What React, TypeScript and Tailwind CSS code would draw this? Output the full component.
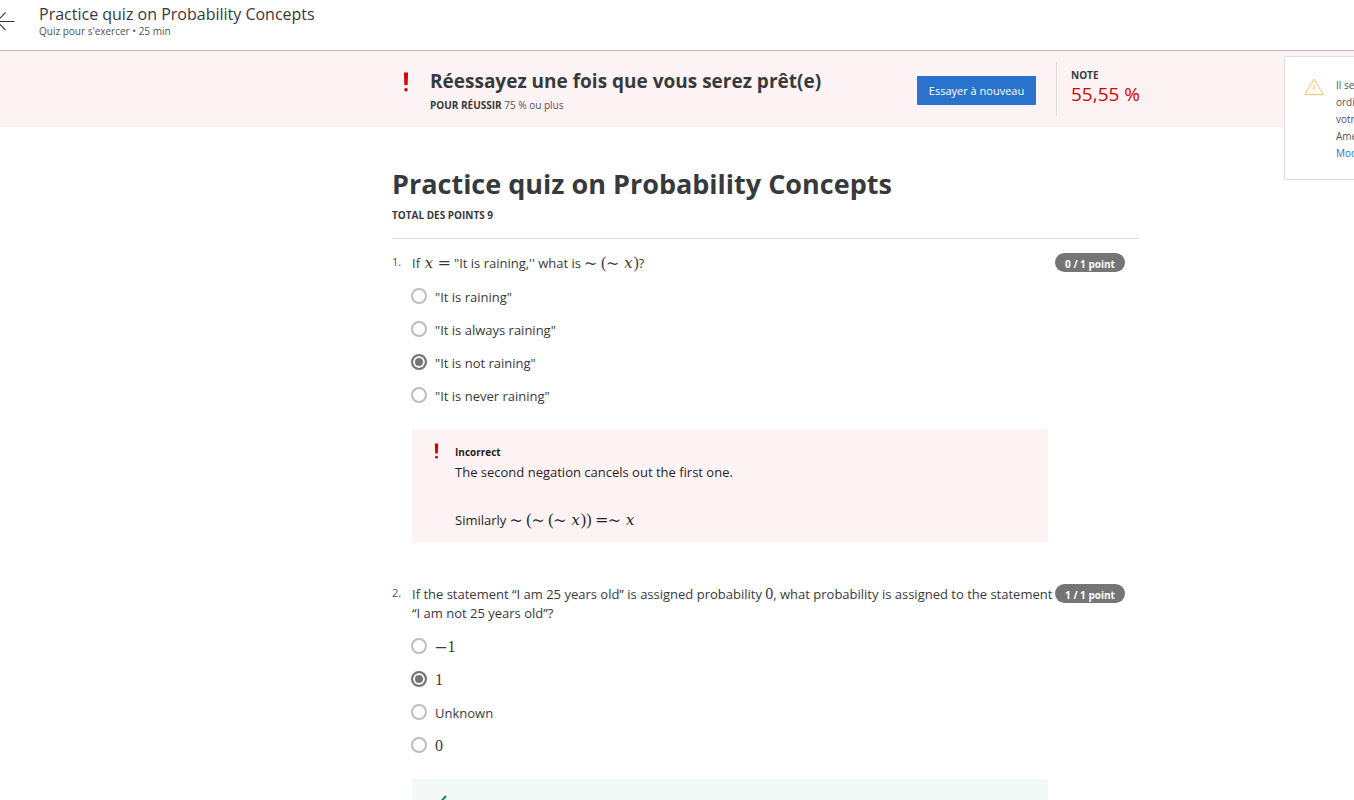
import { useState, type ReactNode } from "react";

function X() {
  return <span className="font-['DejaVu_Math_TeX_Gyre','DejaVu_Serif',serif] text-[15px] leading-none">𝑥</span>;
}

function Op({ children }: { children: ReactNode }) {
  return (
    <span className="font-['DejaVu_Math_TeX_Gyre','DejaVu_Sans',sans-serif] text-[16px] leading-none font-extralight">
      {children}
    </span>
  );
}

function MathText({ children }: { children: ReactNode }) {
  return (
    <span className="font-['Liberation_Serif',serif] text-base leading-none">{children}</span>
  );
}

function Bang({ className }: { className: string }) {
  return (
    <svg viewBox="0 0 6 20" className={className} fill="#d30001" aria-hidden="true">
      <path d="M0.9 0.5h4.2l-0.5 12.5h-3.2z" />
      <circle cx="3" cy="17.7" r="1.8" />
    </svg>
  );
}

interface QuestionProps {
  id: string;
  number: string;
  prompt: ReactNode;
  score: string;
  options: ReactNode[];
  initial: number;
  feedback: ReactNode;
}

function Question({ id, number, prompt, score, options, initial, feedback }: QuestionProps) {
  const [selected, setSelected] = useState(initial);
  return (
    <li className="flex items-start">
      <span className="w-5 shrink-0 text-[11px] leading-[18px] text-[#525252]">{number}</span>
      <div className="min-w-0 flex-1 pt-px">
        <div id={`${id}-prompt`} className="text-[13px] leading-[19px] text-[#373a3c]">
          {prompt}
        </div>
        <div role="radiogroup" aria-labelledby={`${id}-prompt`} className="mt-1.5">
          {options.map((option, i) => (
            <label
              key={i}
              className="flex h-[33px] items-center gap-2 text-[13px] text-[#373a3c]"
            >
              <input
                type="radio"
                name={id}
                checked={selected === i}
                onChange={() => setSelected(i)}
                className="-ml-px size-4 shrink-0 appearance-none rounded-full border-2 border-[#bdbdbd] bg-white checked:border-[#757575] checked:bg-[#757575] checked:shadow-[inset_0_0_0_2px_white]"
              />
              <span className="pt-1">{option}</span>
            </label>
          ))}
        </div>
        <div className="mt-[18px] max-w-[636px]">{feedback}</div>
      </div>
      <div className="mr-[15px] h-[19px] w-[70px] shrink-0 rounded-full bg-[#757575] pt-0.5 text-center text-[10px] leading-[18px] font-bold text-white">
        {score}
      </div>
    </li>
  );
}

export default function App() {
  return (
    <div className="relative flex h-screen flex-col overflow-hidden bg-white font-['Open_Sans','Noto_Sans',sans-serif] text-[#373a3c]">
      <header className="flex h-[51px] shrink-0 items-start border-b border-[#bbbbbb]">
        <a href="#course" aria-label="Retour" className="mt-2.5 w-[39px] shrink-0">
          <svg viewBox="0 0 16 22" className="h-[22px] w-4" fill="none" stroke="#373a3c" strokeWidth="1.1">
            <path d="M14.5 11.5H-2M5.5 2.5L-3 11.5L5.5 20" />
          </svg>
        </a>
        <div className="pt-1">
          <p className="text-base leading-5">Practice quiz on Probability Concepts</p>
          <p className="text-[10px] leading-[14px] text-[#525252]">Quiz pour s'exercer • 25 min</p>
        </div>
      </header>

      <section className="shrink-0 bg-[#fef3f4] pl-[392px]">
        <div className="flex h-[76px] max-w-[748px] items-start">
          <Bang className="mt-[21px] ml-[11px] h-5 w-1.5 shrink-0" />
          <div className="ml-[21px] flex-1 pt-[17px]">
            <h2 className="text-[19px] leading-[26px] font-bold">Réessayez une fois que vous serez prêt(e)</h2>
            <p className="mt-1 text-[10px] leading-[14px] text-[#525252]">
              <strong className="text-[#373a3c]">POUR RÉUSSIR</strong> 75 % ou plus
            </p>
          </div>
          <button type="button" className="mt-[25px] h-[29px] w-[119px] shrink-0 rounded-[1px] bg-[#2a73cc] pt-0.5 text-[11px] text-white">
            Essayer à nouveau
          </button>
          <div className="mt-[11px] ml-5 h-[54px] w-[84px] shrink-0 border-l border-[#dddddd] pt-1.5 pl-3.5 whitespace-nowrap">
            <p className="text-[10px] leading-[14px] font-bold">NOTE</p>
            <p className="text-[19px] leading-6 text-[#d30001]">55,55 %</p>
          </div>
        </div>
      </section>

      <main className="pl-[392px]">
        <div className="max-w-[748px]">
          <h1 className="pt-[38px] text-[27px] leading-[38px] font-bold">Practice quiz on Probability Concepts</h1>
          <p className="mt-[5px] mb-4 text-[10px] leading-[14px] font-bold">TOTAL DES POINTS 9</p>
          <ol className="flex flex-col gap-[42px] border-t border-[#dddddd] pt-3.5">
            <Question
              id="q1"
              number="1."
              score="0 / 1 point"
              initial={2}
              prompt={
                <>
                  If <MathText><X /> <Op>=</Op></MathText> "It is raining,'' what is{" "}
                  <MathText><Op>∼</Op> (<Op>∼</Op> <X />)</MathText>?
                </>
              }
              options={['"It is raining"', '"It is always raining"', '"It is not raining"', '"It is never raining"']}
              feedback={
                <div className="flex min-h-[113px] items-start bg-[#fef3f4] text-[#1f1f1f]">
                  <Bang className="mt-3.5 ml-[22px] h-4 w-[5px] shrink-0" />
                  <div className="ml-4 pt-4">
                    <p className="text-[10px] leading-[14px] font-bold">Incorrect</p>
                    <p className="mt-1 text-[13px] leading-[19px]">The second negation cancels out the first one.</p>
                    <p className="mt-[29px] text-[13px] leading-[19px]">
                      Similarly{" "}
                      <MathText>
                        <Op>∼</Op> (<Op>∼</Op> (<Op>∼</Op> <X />)) <Op>=∼</Op> <X />
                      </MathText>
                    </p>
                  </div>
                </div>
              }
            />
            <Question
              id="q2"
              number="2."
              score="1 / 1 point"
              initial={1}
              prompt={
                <>
                  If the statement “I am 25 years old” is assigned probability <MathText>0</MathText>, what
                  probability is assigned to the statement “I am not 25 years old”?
                </>
              }
              options={[<MathText><Op>−</Op>1</MathText>, <MathText>1</MathText>, "Unknown", <MathText>0</MathText>]}
              feedback={
                <div className="min-h-[113px] bg-[#f3f9f7]">
                  <svg viewBox="0 0 20 16" className="ml-4 h-[46px] w-5" fill="none" stroke="#1f8354" strokeWidth="2">
                    <path d="M4 9L8 13L18 2" />
                  </svg>
                </div>
              }
            />
          </ol>
        </div>
      </main>

      <aside className="absolute top-14 -right-[178px] flex h-[124px] w-[248px] items-start rounded-xs border border-[#dddddd] bg-white">
        <svg viewBox="0 0 20 18" className="mt-[21px] ml-[19px] h-[18px] w-5 shrink-0" fill="none" stroke="#f6c168" strokeWidth="1">
          <path d="M10 1L19.2 16.5H0.8Z M10 6.5V12 M10 13V14.2" />
        </svg>
        <p className="ml-3 pt-5 text-[10px] leading-[17px] text-[#525252]">
          Il semble que votre
          <br />
          ordinateur ait changé
          <br />
          votre fuseau horaire
          <br />
          America/New York.
          <br />
          <a href="#timezone" className="text-[#2a73cc]">Modifier</a>
        </p>
      </aside>
    </div>
  );
}
